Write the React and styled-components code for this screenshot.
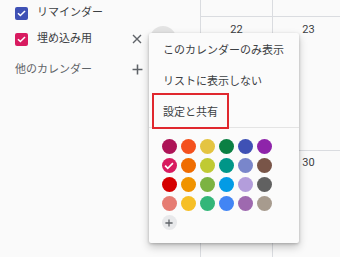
import React from "react";
import styled, { createGlobalStyle } from "styled-components";

const Global = createGlobalStyle`
  html, body { margin: 0; padding: 0; background: #fafafa; }
  body { font-family: Roboto, "Noto Sans CJK JP", sans-serif; color: #3c4043; }
  *, *::before, *::after { box-sizing: border-box; }
`;

const Page = styled.div`
  position: relative;
  display: flex;
  width: 340px;
  height: 257px;
  overflow: hidden;
  background: #fafafa;
`;

const Sidebar = styled.div`
  width: 200px;
  flex: none;
  display: flex;
  flex-direction: column;
`;

const CalRow = styled.div`
  display: flex;
  align-items: center;
  height: 26px;
  padding-left: 15px;
`;

const SectionRow = styled.div`
  display: flex;
  align-items: center;
  height: 35px;
  padding-left: 15px;
`;

const Check = styled.span`
  width: 13px;
  height: 13px;
  border-radius: 2px;
  background: ${(p) => p.$color};
  display: flex;
  align-items: center;
  justify-content: center;
  flex: none;
  margin-right: 9px;
`;

const Label = styled.span`
  font-size: 11px;
  color: #3c4043;
  width: ${(p) => p.$w || 90}px;
  flex: none;
  white-space: nowrap;
  line-height: 14px;
`;

const SectionLabel = styled(Label)`
  color: #5f6368;
`;

const IconSlot = styled.span`
  width: 20px;
  height: 20px;
  display: flex;
  align-items: center;
  justify-content: center;
  flex: none;
`;

const MoreButton = styled.span`
  width: 26px;
  height: 26px;
  border-radius: 50%;
  margin-left: 2.5px;
  background: ${(p) => (p.$active ? "#e3e3e3" : "transparent")};
  flex: none;
`;

const Grid = styled.div`
  flex: 1;
  display: grid;
  grid-template-columns: 72px 72px;
  grid-template-rows: 17px 134px 1fr;
`;

const Cell = styled.div`
  border-left: 1px solid #dadce0;
  border-bottom: ${(p) => (p.$last ? "none" : "1px solid #dadce0")};
  display: flex;
  justify-content: center;
  padding-top: ${(p) => p.$pt || 6}px;
`;

const DayNum = styled.span`
  font-family: Roboto, sans-serif;
  font-size: 11px;
  line-height: 12px;
  color: #3c4043;
`;

const Menu = styled.div`
  position: absolute;
  left: 149px;
  top: 33px;
  width: 150px;
  background: #fbfbfb;
  border-radius: 2px;
  box-shadow: 0 4px 8px rgba(0, 0, 0, 0.22), 0 1px 3px rgba(0, 0, 0, 0.2);
  display: flex;
  flex-direction: column;
`;

const MenuItem = styled.div`
  position: relative;
  height: 31px;
  display: flex;
  align-items: center;
  padding-left: 14px;
  font-size: 11px;
  color: #3c4043;
  white-space: nowrap;
  ${(p) =>
    p.$highlight &&
    `
    &::after {
      content: "";
      position: absolute;
      left: 3px;
      top: -2px;
      width: 77px;
      height: 36px;
      border: 2px solid #e0282e;
    }
  `}
`;

const Divider = styled.div`
  height: 1px;
  margin-top: 1px;
  background: #e4e4e4;
`;

const Palette = styled.div`
  padding: 11px 12px 13px 12.5px;
  display: grid;
  grid-template-columns: repeat(6, 15px);
  grid-auto-rows: 15px;
  gap: 4px;
`;

const Swatch = styled.span`
  width: 15px;
  height: 15px;
  border-radius: 50%;
  background: ${(p) => p.$color};
  display: flex;
  align-items: center;
  justify-content: center;
`;

const AddSwatch = styled(Swatch)`
  background: #e8e9eb;
`;

const palette = [
  "#ad1457", "#f4511e", "#e4c441", "#0b8043", "#3f51b5", "#8e24aa",
  "#d81b60", "#ef6c00", "#c0ca33", "#009688", "#7986cb", "#795548",
  "#d50000", "#f09300", "#7cb342", "#039be5", "#b39ddb", "#616161",
  "#e67c73", "#f6bf26", "#33b679", "#4285f4", "#9e69af", "#a79b8e",
];

const CheckMark = ({ size = 9 }) => (
  <svg width={size} height={size} viewBox="0 0 24 24">
    <path d="M4 12.5l5 5L20 6.5" fill="none" stroke="#fff" strokeWidth="4" strokeLinecap="square" />
  </svg>
);

const CloseIcon = () => (
  <svg width="10" height="10" viewBox="0 0 10 10">
    <path d="M1 1L9 9M9 1L1 9" stroke="#5f6368" strokeWidth="1.4" />
  </svg>
);

const PlusIcon = ({ size = 11, color = "#5f6368", w = 1.4 }) => (
  <svg width={size} height={size} viewBox="0 0 10 10">
    <path d="M5 0.5V9.5M0.5 5H9.5" stroke={color} strokeWidth={w} />
  </svg>
);

export default function App() {
  return (
    <Page>
      <Global />
      <Sidebar>
        <CalRow>
          <Check $color="#3f51b5"><CheckMark /></Check>
          <Label>リマインダー</Label>
        </CalRow>
        <CalRow>
          <Check $color="#d81b60"><CheckMark /></Check>
          <Label>埋め込み用</Label>
          <IconSlot><CloseIcon /></IconSlot>
          <MoreButton $active />
        </CalRow>
        <SectionRow>
          <SectionLabel $w={112}>他のカレンダー</SectionLabel>
          <IconSlot><PlusIcon /></IconSlot>
        </SectionRow>
      </Sidebar>
      <Grid>
        <Cell />
        <Cell />
        <Cell $pt={7}><DayNum>22</DayNum></Cell>
        <Cell $pt={7}><DayNum>23</DayNum></Cell>
        <Cell $last $pt={6}><DayNum>29</DayNum></Cell>
        <Cell $last $pt={6}><DayNum>30</DayNum></Cell>
      </Grid>
      <Menu>
        <MenuItem>このカレンダーのみ表示</MenuItem>
        <MenuItem>リストに表示しない</MenuItem>
        <MenuItem $highlight>設定と共有</MenuItem>
        <Divider />
        <Palette>
          {palette.map((c, i) => (
            <Swatch key={c} $color={c}>{i === 6 && <CheckMark size={10} />}</Swatch>
          ))}
          <AddSwatch><PlusIcon size={8} color="#5f6368" w={1.6} /></AddSwatch>
        </Palette>
      </Menu>
    </Page>
  );
}
